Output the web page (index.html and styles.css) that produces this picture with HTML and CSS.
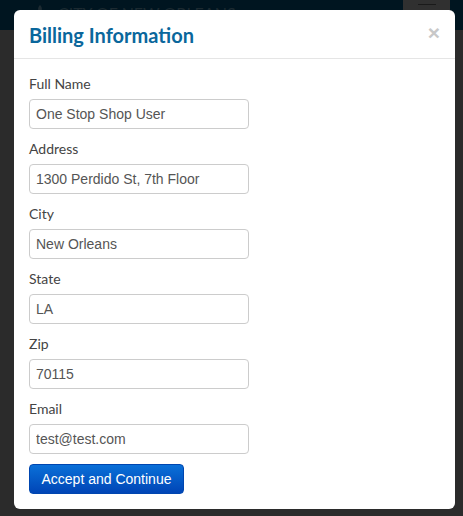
FILE: index.html
```
<!DOCTYPE html>
<html lang="en">
<head>
    <meta charset="UTF-8">
    <meta name="viewport" content="width=device-width, initial-scale=1.0">
    <title>Billing Information</title>
    <link rel="stylesheet" href="styles.css">
</head>
<body>
    <div class="navbar">
        <div class="brand">
            <svg class="brand-logo" width="20" height="16" viewBox="0 0 20 16">
                <path d="M10 1 C7 4 8 7 10 9 C12 7 13 4 10 1 Z M3 6 C5 6 7 8 8 10 L6 11 C5 9 4 8 3 9 Z M17 6 C15 6 13 8 12 10 L14 11 C15 9 16 8 17 9 Z M5 11 H15 V12 H5 Z" fill="#1c2a31"/>
            </svg>
            <span class="brand-name">CITY OF NEW ORLEANS</span>
        </div>
        <div class="toggle"><span></span></div>
    </div>
    <div class="backdrop"></div>

    <div class="modal">
        <div class="modal-header">
            <h4 class="modal-title">Billing Information</h4>
            <button class="close" type="button">&times;</button>
        </div>
        <form class="modal-body">
            <label for="fullname">Full Name</label>
            <input type="text" id="fullname" value="One Stop Shop User">

            <label for="address">Address</label>
            <input type="text" id="address" value="1300 Perdido St, 7th Floor">

            <label for="city">City</label>
            <input type="text" id="city" value="New Orleans">

            <label for="state">State</label>
            <input type="text" id="state" value="LA">

            <label for="zip">Zip</label>
            <input type="text" id="zip" value="70115">

            <label for="email">Email</label>
            <input type="text" id="email" value="test@test.com">

            <button type="submit" class="btn-primary">Accept and Continue</button>
        </form>
    </div>
</body>
</html>
```

FILE: styles.css
```
body {
    margin: 0;
    background-color: #2b2b2b;
    font-family: Lato, "Liberation Sans", sans-serif;
    height: 516px;
    overflow: hidden;
}
.navbar {
    height: 30px;
    background-color: #001520;
    display: flex;
    justify-content: space-between;
}
.brand {
    display: flex;
    align-items: center;
    padding-left: 30px;
    margin-top: -6px;
}
.brand-logo {
    margin-right: 8px;
}
.brand-name {
    color: #1c2a31;
    font-size: 16px;
}
.toggle {
    width: 47px;
    height: 30px;
    margin-right: 13px;
    background-color: #303030;
    display: flex;
    justify-content: center;
}
.toggle span {
    display: block;
    width: 18px;
    height: 1px;
    margin-top: 4px;
    background-color: #1a1a1a;
}
.modal {
    position: absolute;
    top: 10px;
    left: 14px;
    width: 441px;
    background-color: #fff;
    border-radius: 6px;
}
.modal-header {
    height: 49px;
    padding: 0 15px;
    border-bottom: 1px solid #e5e5e5;
    display: flex;
    justify-content: space-between;
    align-items: center;
    box-sizing: border-box;
}
.modal-title {
    margin: 0;
    color: #0a679c;
    font-size: 20px;
    font-weight: bold;
    padding-top: 2px;
}
.close {
    background: transparent;
    border: none;
    padding: 0;
    margin-top: -4px;
    color: #c8c8c8;
    font-size: 21px;
    font-weight: bold;
    font-family: "Liberation Sans", sans-serif;
    line-height: 1;
    cursor: pointer;
}
.modal-body {
    padding: 15px;
    display: flex;
    flex-direction: column;
    align-items: flex-start;
}
label {
    display: block;
    color: #444;
    font-size: 14px;
    line-height: 20px;
    margin-bottom: 5px;
}
input {
    width: 220px;
    height: 30px;
    box-sizing: border-box;
    padding: 5px 6px;
    margin: 0 0 10px 0;
    border: 1px solid #ccc;
    border-radius: 4px;
    color: #555;
    font-family: "Liberation Sans", Arial, sans-serif;
    font-size: 14px;
}
.btn-primary {
    width: 155px;
    height: 30px;
    border: 1px solid #0046b0;
    border-radius: 4px;
    background: linear-gradient(#0a70d8, #0045b6);
    color: #fff;
    font-family: "Liberation Sans", Arial, sans-serif;
    font-size: 14px;
    cursor: pointer;
}
```
